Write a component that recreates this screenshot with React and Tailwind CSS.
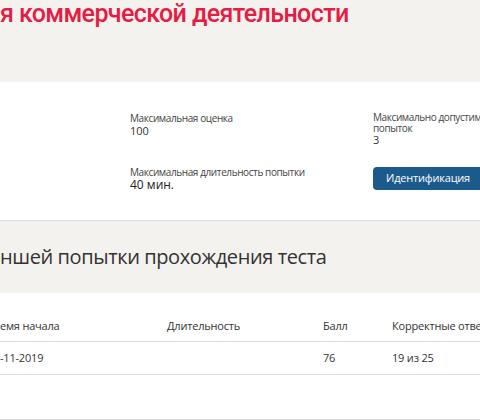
export default function App() {
  return (
    <div className="w-[480px] h-[420px] overflow-hidden bg-white font-['Open_Sans',sans-serif] text-[#333]">
      {/* Заголовок курса */}
      <div className="h-[82px] bg-[#f3f2ef]">
        <h1 className="whitespace-nowrap font-['Roboto',sans-serif] font-medium text-[25px] leading-[28px] tracking-[-0.6px] text-[#e51c44]">
          я коммерческой деятельности
        </h1>
      </div>

      {/* Параметры теста */}
      <div className="h-[139px] border-b border-[#dddddd] grid grid-cols-[373px_1fr] pt-[30px]">
        <div className="pl-[130px] flex flex-col gap-[29px]">
          <div>
            <div className="text-[10px] leading-[13px] tracking-[-0.4px] text-[#444] whitespace-nowrap">Максимальная оценка</div>
            <div className="text-[11px] leading-[12px]">100</div>
          </div>
          <div>
            <div className="text-[10px] leading-[13px] tracking-[-0.4px] text-[#444] whitespace-nowrap">Максимальная длительность попытки</div>
            <div className="text-[12px] leading-[12px] text-[#222]">40 мин.</div>
          </div>
        </div>
        <div className="flex flex-col gap-[21px] overflow-hidden">
          <div>
            <div className="text-[10px] leading-[11px] tracking-[-0.4px] text-[#444] whitespace-nowrap">Максимально допустимое количество</div>
            <div className="text-[10px] leading-[11px] tracking-[-0.4px] text-[#444]">попыток</div>
            <div className="text-[11px] leading-[12px]">3</div>
          </div>
          <button className="w-[110px] h-[23px] shrink-0 rounded-[4px] bg-[#1d5a8c] text-white text-[11px] tracking-[-0.2px] text-left pl-[13px]">
            Идентификация
          </button>
        </div>
      </div>

      {/* Заголовок результатов */}
      <div className="h-[72px] bg-[#f3f2ef] flex items-center">
        <h2 className="whitespace-nowrap text-[20px] leading-[30px] tracking-[-0.4px] text-[#333]">ншей попытки прохождения теста</h2>
      </div>

      {/* Таблица попыток */}
      <div className="pt-[18px] text-[11px] tracking-[-0.2px] whitespace-nowrap">
        <div className="grid grid-cols-[167px_156px_69px_1fr] h-[31px] items-center border-b border-[#dcdcdc]">
          <div>емя начала</div>
          <div>Длительность</div>
          <div>Балл</div>
          <div>Корректные ответы</div>
        </div>
        <div className="grid grid-cols-[167px_156px_69px_1fr] h-[33px] items-center border-b border-[#dcdcdc]">
          <div>-11-2019</div>
          <div></div>
          <div>76</div>
          <div>19 из 25</div>
        </div>
        <div className="h-[45px] border-b border-[#dcdcdc]"></div>
      </div>
    </div>
  );
}
